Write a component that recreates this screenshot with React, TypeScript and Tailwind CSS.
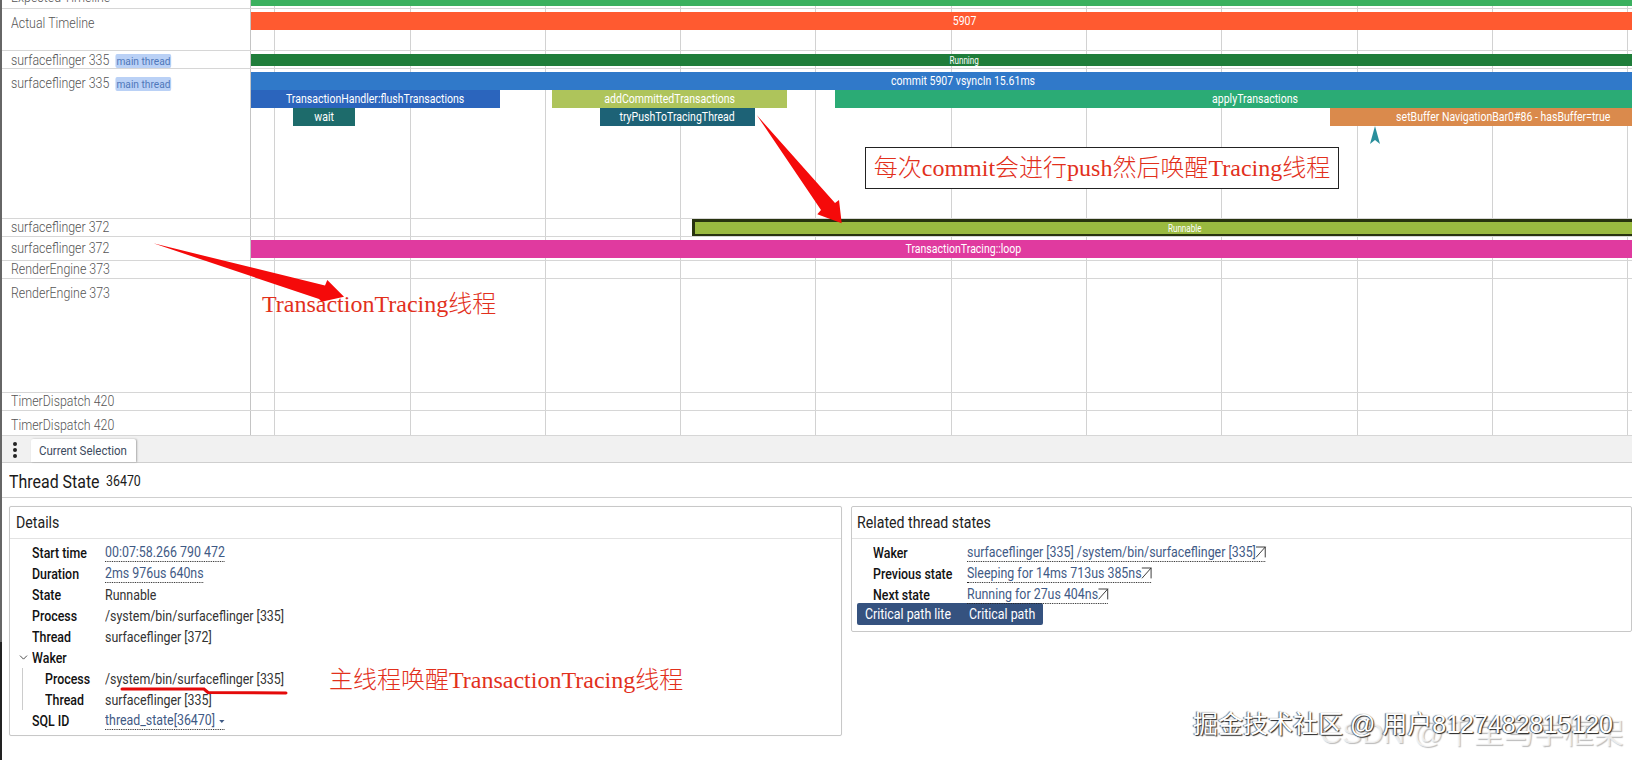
import React from "react";
import { ArrowUpRight, ChevronDown } from "lucide-react";

const C = ({ children, className = "" }: { children: React.ReactNode; className?: string }) => (
  <span className={"inline-block origin-left scale-x-[.885] whitespace-nowrap " + className}>{children}</span>
);

type Slice = { left: number; width: number; top: number; h: number; bg: string; label?: string; small?: boolean; extra?: string };

const SliceBar = ({ s }: { s: Slice }) => (
  <div
    className={"absolute flex items-center justify-center overflow-hidden text-white whitespace-nowrap " + (s.extra || "")}
    style={{ left: s.left, width: s.width, top: s.top, height: s.h, backgroundColor: s.bg }}
  >
    {s.label && (
      <span className={"inline-block origin-center scale-x-[.81] " + (s.small ? "text-[10px]" : "text-[13px]")}>{s.label}</span>
    )}
  </div>
);

const Chip = () => (
  <span className="ml-[7px] inline-block h-[14px] rounded-[2px] bg-[#bad1f6] px-[1px] text-[11.5px] leading-[14px] font-normal text-[#4f78ba]">main thread</span>
);

const Track = ({
  h, label, chip, labelTop, slices = [],
}: { h: number; label: string; chip?: boolean; labelTop: number; slices?: Slice[] }) => (
  <div className="flex border-b border-[#d6d6d6]" style={{ height: h }}>
    <div className="relative w-[248px] shrink-0 overflow-hidden pl-[9px] text-[14px] font-light leading-[18px] text-[#555]">
      <div style={{ marginTop: labelTop }}>
        <C>
          {label}
          {chip && <Chip />}
        </C>
      </div>
    </div>
    <div className="relative flex-1 overflow-hidden border-l border-[#c4c4c4]">
      {slices.map((s, i) => <SliceBar key={i} s={s} />)}
    </div>
  </div>
);

const Row = ({ k, v, link, indent, chevron, caret }: { k: string; v?: string; link?: boolean; indent?: boolean; chevron?: boolean; caret?: boolean }) => (
  <div className="relative flex h-[21px] items-center text-[14px] leading-[20px]">
    {chevron && <ChevronDown size={13} strokeWidth={1.6} className="absolute left-[-15px] top-[4px] text-[#333]" />}
    <div className={"w-[73px] shrink-0 font-medium text-[#111] " + (indent ? "pl-[13px]" : "")}>
      <C>{k}</C>
    </div>
    {v && (link ? (
      <C className="border-b border-dotted border-[#222] leading-[17px] text-[#3f5a85]">
        {v}
        {caret && <span className="ml-[5px] inline-block translate-y-[-2px] border-x-[3px] border-t-[3px] border-x-transparent border-t-[#3f5a85]" />}
      </C>
    ) : (
      <C className="text-[#333]">{v}</C>
    ))}
  </div>
);

const RelRow = ({ k, v }: { k: string; v: string }) => (
  <div className="flex h-[21px] items-center text-[14px] leading-[20px]">
    <div className="w-[94px] shrink-0 font-medium text-[#111]"><C>{k}</C></div>
    <C className="border-b border-dotted border-[#222] leading-[17px] text-[#3f5a85]">
      {v}
      <ArrowUpRight size={24} strokeWidth={1} className="-my-[6px] -mr-[7px] -ml-[6px] inline-block translate-y-[-1px] text-[#333]" />
    </C>
  </div>
);

const gridLines = [274, 410, 545, 680, 815, 951, 1086, 1221, 1357, 1492, 1627];
const serif = "font-['Liberation_Serif','Noto_Sans_CJK_SC',serif]";

export default function App() {
  return (
    <div className="relative h-[760px] w-[1632px] overflow-hidden bg-white font-['Roboto',sans-serif]">
      <div className="flex h-full flex-col border-l-2 border-[#666]">
        {/* Timeline */}
        <div className="relative h-[436px] shrink-0 overflow-hidden">
          <div className="absolute inset-0 z-0">
            {gridLines.map((x) => (
              <div key={x} className="absolute top-0 h-full w-px bg-[#d2d2d2]" style={{ left: x - 2 }} />
            ))}
          </div>
          <div className="relative z-10">
            <div className="mt-[-10px]">
              <Track h={19} label="Expected Timeline" labelTop={-2} slices={[{ left: 0, width: 1430, top: 10, h: 6, bg: "#3bb05f" }]} />
            </div>
            <Track h={42} label="Actual Timeline" labelTop={5} slices={[{ left: 0, width: 1428, top: 3, h: 18, bg: "#ff5a30", label: "5907" }]} />
            <Track h={18} label="surfaceflinger 335" chip labelTop={0} slices={[{ left: 0, width: 1426, top: 3, h: 12, bg: "#1f7d3a", label: "Running", small: true }]} />
            <Track h={150} label="surfaceflinger 335" chip labelTop={5} slices={[
              { left: 0, width: 1424, top: 3, h: 18, bg: "#3079c9", label: "commit 5907 vsyncIn 15.61ms" },
              { left: 0, width: 249, top: 21, h: 18, bg: "#2b65bd", label: "TransactionHandler:flushTransactions" },
              { left: 42, width: 62, top: 39, h: 18, bg: "#1d6b6b", label: "wait" },
              { left: 301, width: 235, top: 21, h: 18, bg: "#aec45b", label: "addCommittedTransactions" },
              { left: 349, width: 155, top: 39, h: 18, bg: "#1d6276", label: "tryPushToTracingThread" },
              { left: 584, width: 840, top: 21, h: 18, bg: "#2bab75", label: "applyTransactions" },
              { left: 1079, width: 346, top: 39, h: 18, bg: "#da8a4c", label: "setBuffer NavigationBar0#86 - hasBuffer=true" },
            ]} />
            <Track h={18} label="surfaceflinger 372" labelTop={-1} slices={[
              { left: 441, width: 986, top: 0, h: 18, bg: "#9aba40", label: "Runnable", small: true, extra: "border-[3px] border-[#28330f]" },
            ]} />
            <Track h={24} label="surfaceflinger 372" labelTop={2} slices={[{ left: 0, width: 1424, top: 3, h: 18, bg: "#e03a9f", label: "TransactionTracing::loop" }]} />
            <Track h={18} label="RenderEngine 373" labelTop={-1} />
            <Track h={114} label="RenderEngine 373" labelTop={5} />
            <Track h={18} label="TimerDispatch 420" labelTop={-1} />
            <Track h={25} label="TimerDispatch 420" labelTop={5} />
          </div>
        </div>

        {/* Tab bar */}
        <div className="flex h-[27px] shrink-0 items-end border-b border-[#cfcfcf] bg-[#f1f1f1]">
          <svg width="29" height="27" viewBox="0 0 29 27" className="shrink-0 self-start">
            <circle cx="13" cy="8" r="2" fill="#222" />
            <circle cx="13" cy="14" r="2" fill="#222" />
            <circle cx="13" cy="20" r="2" fill="#222" />
          </svg>
          <div className="flex h-[23px] w-[105px] items-center rounded-t-[2px] bg-white pl-[8px] pt-[1px] text-[13px] text-[#3d4b5e] shadow-[1px_0_2px_rgba(0,0,0,.3)]">
            <C>Current Selection</C>
          </div>
        </div>

        {/* Header */}
        <div className="flex h-[35px] shrink-0 items-center border-b border-[#cfcfcf] pl-[7px] pt-[3px] text-[#1a1a1a]">
          <span className="w-[97px] text-[18px] leading-[24px]"><C>Thread State</C></span>
          <span className="text-[14px]"><C>36470</C></span>
        </div>

        {/* Panels */}
        <div className="flex items-start gap-[9px] pl-[7px] pt-[8px]">
          <div className="h-[230px] w-[833px] shrink-0 rounded-[2px] border border-[#c8c8c8] shadow-[0_0_1px_rgba(0,0,0,.1)]">
            <div className="flex h-[32px] items-center border-b border-[#e2e2e2] pl-[6px] text-[16px] text-[#222]"><C>Details</C></div>
            <div className="relative pl-[22px] pt-[3px]">
              <Row k="Start time" v="00:07:58.266 790 472" link />
              <Row k="Duration" v="2ms 976us 640ns" link />
              <Row k="State" v="Runnable" />
              <Row k="Process" v="/system/bin/surfaceflinger [335]" />
              <Row k="Thread" v="surfaceflinger [372]" />
              <Row k="Waker" chevron />
              <div className="ml-[-10px] border-l border-[#ccc] pl-[9px]">
                <Row k="Process" v="/system/bin/surfaceflinger [335]" indent />
                <Row k="Thread" v="surfaceflinger [335]" indent />
              </div>
              <Row k="SQL ID" v="thread_state[36470]" link caret />
            </div>
          </div>
          <div className="h-[126px] flex-1 rounded-[2px] border border-[#c8c8c8]">
            <div className="flex h-[32px] items-center border-b border-[#e2e2e2] pl-[5px] text-[16px] text-[#222]"><C>Related thread states</C></div>
            <div className="pl-[21px] pt-[3px]">
              <RelRow k="Waker" v="surfaceflinger [335] /system/bin/surfaceflinger [335]" />
              <RelRow k="Previous state" v="Sleeping for 14ms 713us 385ns" />
              <RelRow k="Next state" v="Running for 27us 404ns" />
            </div>
            <div className="ml-[5px] mt-[-2px] flex text-[14px] leading-[22px] text-white">
              <div className="w-[104px] rounded-l-[2px] bg-[#35527f] pl-[8px]"><C>Critical path lite</C></div>
              <div className="w-[82px] rounded-r-[2px] bg-[#35527f] pl-[8px]"><C>Critical path</C></div>
            </div>
          </div>
        </div>
      </div>

      {/* Left edge darker part */}
      <div className="absolute bottom-0 left-0 top-[642px] w-[2px] bg-[#222]" />

      {/* Annotations */}
      <svg className="pointer-events-none absolute left-0 top-0 z-20" width="1632" height="760" viewBox="0 0 1632 760">
        <polygon points="756.7,115 835,203 839,200 841.7,223.3 817.3,214.3 821,210" fill="#f50a0a" />
        <polygon points="153.3,243.3 325,285.5 327.3,280 344,296.7 321.7,301.7 319,299" fill="#f50a0a" />
        <path d="M122 689 L204 689 L208 692.5 L286 693" stroke="#e40a0a" strokeWidth="3" fill="none" strokeLinecap="round" />
        <path d="M1375 126 L1380 144 L1375 140 L1370 144 Z" fill="#2a8f9c" />
      </svg>
      <div className={"absolute left-[865px] top-[147px] z-20 flex h-[42px] w-[474px] items-center justify-center border border-[#222] bg-white text-[24px] font-light whitespace-nowrap text-[#e2301c] " + serif}>
        每次commit会进行push然后唤醒Tracing线程
      </div>
      <div className={"absolute left-[262px] top-[290px] z-20 text-[24px] font-light leading-[28px] whitespace-nowrap text-[#e2301c] " + serif}>
        TransactionTracing线程
      </div>
      <div className={"absolute left-[329px] top-[666px] z-20 text-[24px] font-light leading-[28px] whitespace-nowrap text-[#e2301c] " + serif}>
        主线程唤醒TransactionTracing线程
      </div>

      {/* Watermarks */}
      <div className="absolute left-[1320px] top-[716px] z-20 font-['Liberation_Sans','Noto_Sans_CJK_SC',sans-serif] text-[30px] leading-[34px] whitespace-nowrap text-white/70 [text-shadow:1px_1px_1px_#bbb]">
        CSDN @千里马学框架
      </div>
      <div className="absolute left-[1193px] top-[710px] z-30 font-['Liberation_Sans','Noto_Sans_CJK_SC',sans-serif] text-[25px] leading-[28px] whitespace-nowrap text-white [text-shadow:1px_1px_1px_#222,-1px_0_1px_#666]">
        掘金技术社区 @ 用户8127482815120
      </div>
    </div>
  );
}
